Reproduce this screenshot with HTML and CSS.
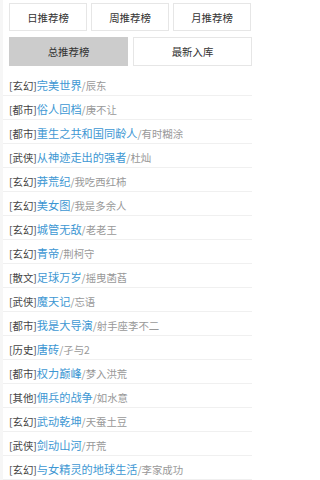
FILE: index.html
```html
<!DOCTYPE html>
<html lang="zh-CN">
<head>
<meta charset="utf-8">
<meta name="viewport" content="width=device-width, initial-scale=1">
<title>推荐榜</title>
<link rel="stylesheet" href="styles.css">
</head>
<body>
<div class="wrap">
  <div class="tabs tabs-3">
    <a class="tab">日推荐榜</a>
    <a class="tab">周推荐榜</a>
    <a class="tab">月推荐榜</a>
  </div>
  <div class="tabs tabs-2">
    <a class="tab active">总推荐榜</a>
    <a class="tab">最新入库</a>
  </div>
  <ul class="list">
    <li><span class="cat">[玄幻]</span><a class="title">完美世界</a><span class="author">/辰东</span></li>
    <li><span class="cat">[都市]</span><a class="title">俗人回档</a><span class="author">/庚不让</span></li>
    <li><span class="cat">[都市]</span><a class="title">重生之共和国同龄人</a><span class="author">/有时糊涂</span></li>
    <li><span class="cat">[武侠]</span><a class="title">从神迹走出的强者</a><span class="author">/杜灿</span></li>
    <li><span class="cat">[玄幻]</span><a class="title">莽荒纪</a><span class="author">/我吃西红柿</span></li>
    <li><span class="cat">[玄幻]</span><a class="title">美女图</a><span class="author">/我是多余人</span></li>
    <li><span class="cat">[玄幻]</span><a class="title">城管无敌</a><span class="author">/老老王</span></li>
    <li><span class="cat">[玄幻]</span><a class="title">青帝</a><span class="author">/荆柯守</span></li>
    <li><span class="cat">[散文]</span><a class="title">足球万岁</a><span class="author">/摇曳菡萏</span></li>
    <li><span class="cat">[武侠]</span><a class="title">魔天记</a><span class="author">/忘语</span></li>
    <li><span class="cat">[都市]</span><a class="title">我是大导演</a><span class="author">/射手座李不二</span></li>
    <li><span class="cat">[历史]</span><a class="title">唐砖</a><span class="author">/孑与2</span></li>
    <li><span class="cat">[都市]</span><a class="title">权力巅峰</a><span class="author">/梦入洪荒</span></li>
    <li><span class="cat">[其他]</span><a class="title">佣兵的战争</a><span class="author">/如水意</span></li>
    <li><span class="cat">[玄幻]</span><a class="title">武动乾坤</a><span class="author">/天蚕土豆</span></li>
    <li><span class="cat">[武侠]</span><a class="title">剑动山河</a><span class="author">/开荒</span></li>
    <li><span class="cat">[玄幻]</span><a class="title">与女精灵的地球生活</a><span class="author">/李家成功</span></li>
  </ul>
</div>
</body>
</html>
```

FILE: styles.css
```css
html, body {
  margin: 0;
  padding: 0;
}
html {
  background: #fff;
}
body {
  width: 253px;
  background: #f6f6f6;
  font-family: "Noto Sans CJK SC", "Noto Sans", sans-serif;
  color: #444;
}
.wrap {
  margin-left: 3px;
  background: #fff;
  padding-top: 3px;
  min-height: 477px;
}
.tabs {
  display: grid;
  gap: 4px;
  padding: 0 2px 0 6px;
}
.tabs-3 {
  grid-template-columns: 1fr 1fr 1fr;
}
.tabs-2 {
  grid-template-columns: 1fr 1fr;
  margin-top: 6px;
  gap: 5px;
  padding-right: 1px;
}
.tab {
  display: flex;
  align-items: center;
  justify-content: center;
  height: 26px;
  border: 1px solid #e6e6e6;
  background: #fff;
  font-size: 10.4px;
  color: #333;
}
.tabs-2 .tab {
  height: 27px;
}
.tab.active {
  background: #cccccc;
  border-color: #cccccc;
}
.list {
  list-style: none;
  margin: 6px 0 0;
  padding: 0;
}
.list li {
  height: 23px;
  line-height: 23px;
  border-bottom: 1px solid #f0f0f0;
  padding-left: 6px;
  margin-right: 1px;
  white-space: nowrap;
  overflow: hidden;
}
.cat {
  font-size: 10.4px;
  color: #444;
}
.title {
  font-size: 11.2px;
  color: #3d97d3;
}
.author {
  font-size: 10.4px;
  color: #999;
}
```
